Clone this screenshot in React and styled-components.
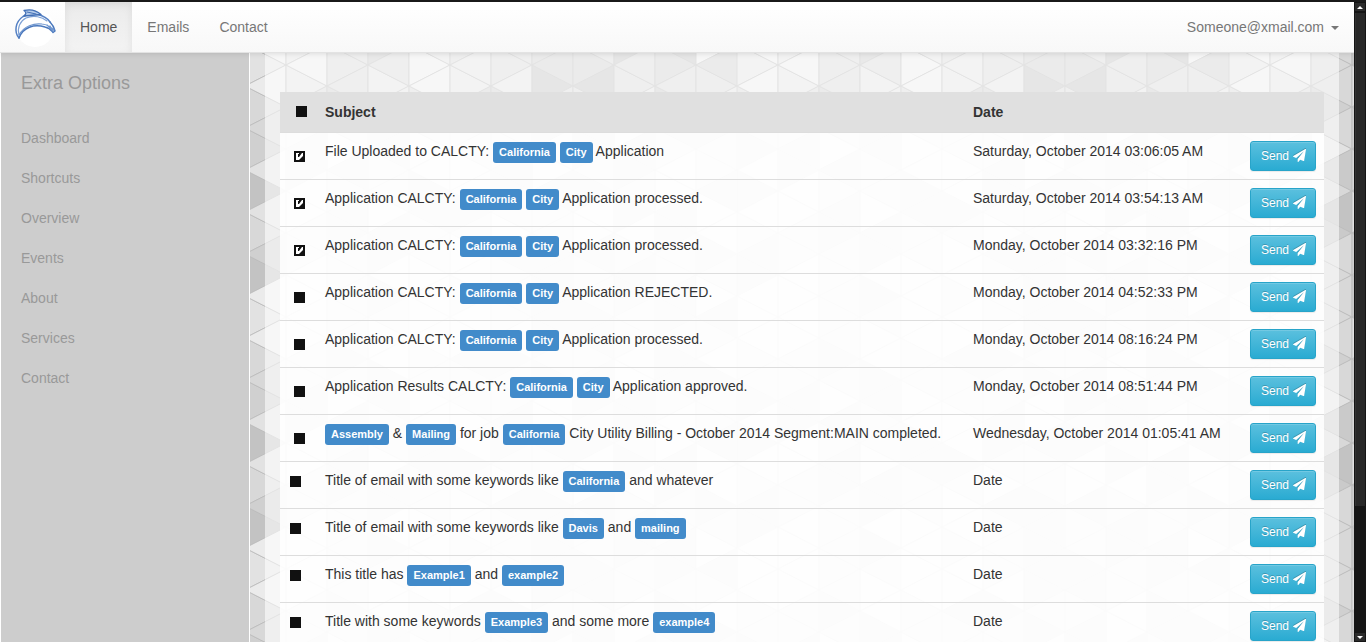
import React, { useState } from "react";
import styled, { createGlobalStyle } from "styled-components";

const GlobalStyle = createGlobalStyle`
  * { box-sizing: border-box; }
  body {
    margin: 0;
    background: #1a1a1a;
    color: #333;
    font: 14px/20px "Liberation Sans", Arial, sans-serif;
  }
`;

const Window = styled.div`
  display: flex;
  height: 100vh;
  padding-top: 2px;
  overflow: hidden;
`;

const Page = styled.div`
  flex: 1;
  min-width: 0;
  display: flex;
  flex-direction: column;
  background: #fff;
`;

const Navbar = styled.nav`
  position: relative;
  z-index: 1;
  flex: none;
  display: flex;
  height: 51px;
  background: linear-gradient(#fff, #f8f8f8);
  border-bottom: 1px solid #e3e3e3;
  box-shadow: 0 1px 5px rgba(0, 0, 0, 0.1);
`;

const Brand = styled.a`
  display: flex;
  padding: 2px 5px 2px 10px;
  svg { display: block; }
`;

const NavLink = styled.a`
  padding: 15px;
  color: ${(p) => (p.$active ? "#555" : "#777")};
  text-decoration: none;
  background: ${(p) => (p.$active ? "linear-gradient(#ebebeb, #f3f3f3)" : "none")};
  box-shadow: ${(p) => (p.$active ? "inset 0 3px 9px rgba(0, 0, 0, 0.075)" : "none")};
`;

const UserMenu = styled.button`
  display: flex;
  align-items: center;
  gap: 7px;
  margin-left: auto;
  padding: 0 15px;
  border: 0;
  background: none;
  color: #777;
  font: inherit;
`;

const Caret = styled.span`
  border: 4px solid transparent;
  border-top-color: #777;
  border-bottom: 0;
  margin-top: 2px;
`;

const Body = styled.div`
  flex: 1;
  min-height: 0;
  display: flex;
`;

const Sidebar = styled.aside`
  flex: none;
  width: 250px;
  padding: 20px;
  border: solid #fff;
  border-width: 0 1px;
  background: #cdcdcd;
  color: #999;
`;

const SideTitle = styled.h2`
  margin: 0 0 25px;
  font-size: 18px;
  line-height: 20px;
  font-weight: normal;
`;

const SideLink = styled.a`
  display: block;
  color: inherit;
  line-height: 40px;
  text-decoration: none;
`;

const Main = styled.main`
  position: relative;
  flex: 1;
  min-width: 0;
  padding: 0 15px;
  overflow: hidden;
`;

const Backdrop = styled.svg`
  position: absolute;
  inset: 0;
  width: 100%;
  height: 100%;
`;

const Container = styled.div`
  position: relative;
  min-height: 100%;
  padding: 39px 15px;
  background: rgba(255, 255, 255, 0.58);
`;

const MailTable = styled.table`
  width: 100%;
  table-layout: fixed;
  border-spacing: 0;
  background: rgba(255, 255, 255, 0.86);
`;

const Col = styled.col`
  width: ${(p) => p.$width || "auto"};
`;

const Th = styled.th`
  padding: 10px 8px;
  background: rgba(221, 221, 221, 0.9);
  text-align: left;
`;

const Td = styled.td`
  padding: 8px;
  border-top: 1px solid #ddd;
  vertical-align: top;
  white-space: nowrap;
`;

const insets = { head: "0 0 2px 8px", label: "10px 0 0 6px", plain: "6px 0 0 2px" };

const Check = styled.input.attrs({ type: "checkbox" })`
  appearance: none;
  display: block;
  width: 11px;
  height: 11px;
  margin: ${(p) => insets[p.$inset]};
  background: #111;
  &:checked {
    background: #111 url("data:image/svg+xml,%3Csvg xmlns='http://www.w3.org/2000/svg' viewBox='0 0 11 11'%3E%3Cpath d='M2 2h3v1H4v3h1l3-4h1v3L5 9H2z' fill='white'/%3E%3C/svg%3E");
  }
`;

const Tag = styled.span`
  display: inline-block;
  padding: 5px 6px;
  border-radius: 3px;
  background: #428bca;
  color: #fff;
  font-size: 11px;
  line-height: 11px;
  font-weight: bold;
`;

const SendButton = styled.button`
  display: flex;
  align-items: flex-start;
  gap: 4px;
  width: 66px;
  height: 30px;
  padding: 5px 10px;
  border: 1px solid #28a4c9;
  border-radius: 3px;
  background: linear-gradient(#5bc0de, #2aabd2);
  box-shadow: inset 0 1px 0 rgba(255, 255, 255, 0.15), 0 1px 1px rgba(0, 0, 0, 0.075);
  color: #fff;
  font: 12px/18px "Liberation Sans", Arial, sans-serif;
  text-shadow: 0 -1px 0 rgba(0, 0, 0, 0.2);
  svg {
    flex: none;
    margin-top: 2px;
    filter: drop-shadow(0 -1px 0 rgba(0, 0, 0, 0.2));
  }
`;

const ScrollTrack = styled.div`
  flex: none;
  display: flex;
  flex-direction: column;
  width: 12px;
  background: #151515;
`;

const ScrollArrow = styled.span`
  flex: none;
  display: flex;
  align-items: center;
  justify-content: center;
  height: 10px;
  background: #2b2b2b;
  border: 1px solid #151515;
  &::after {
    content: "";
    border: 3px solid transparent;
    ${(p) => (p.$up ? "border-top: 0; border-bottom-color: #fff;" : "border-bottom: 0; border-top-color: #fff;")}
  }
`;

const ScrollThumb = styled.span`
  height: 77%;
  margin: 1px 1px auto;
  background: #282828;
  border-left: 1px solid #333;
`;

/* Shades of the triangle tile: 12 columns by 6 rows, lightest 0 to darkest 5. */
const rightPointing = [
  [2, 3, 5, 2, 5, 1], [1, 2, 3, 1, 2, 1], [3, 1, 2, 4, 2, 2], [1, 3, 2, 1, 3, 4],
  [2, 1, 3, 2, 1, 0], [1, 2, 0, 3, 1, 2], [3, 2, 4, 1, 2, 2], [5, 3, 1, 2, 4, 3],
  [2, 4, 3, 1, 2, 3], [2, 1, 4, 3, 2, 5], [4, 2, 1, 3, 2, 3], [2, 4, 2, 1, 3, 0],
];
const leftPointing = [
  [0, 2, 1, 1, 3, 0], [0, 2, 3, 1, 2, 1], [2, 2, 4, 5, 2, 2], [2, 1, 3, 2, 4, 1],
  [0, 2, 1, 3, 2, 1], [1, 3, 2, 0, 2, 1], [1, 2, 4, 2, 3, 2], [3, 2, 1, 3, 2, 4],
  [5, 3, 2, 1, 4, 2], [2, 1, 3, 2, 1, 3], [2, 3, 1, 4, 2, 5], [3, 1, 2, 3, 1, 2],
];
const shades = ["#ebebeb", "#e2e2e2", "#d8d8d8", "#d0d0d0", "#cacaca", "#c3c3c3"];

function TrianglePattern() {
  const cells = [];
  for (let c = 0; c < 12; c++) {
    const x = c * 41;
    for (let r = -1; r < 7; r++) {
      const k = (r + 6) % 6;
      const y = r * 42 + (c % 2 ? -21 : 0);
      cells.push(
        <path key={`r${c}-${r}`} d={`M${x} ${y}v42l41-21z`} fill={shades[rightPointing[c][k]]} />,
        <path key={`l${c}-${r}`} d={`M${x} ${y}l41-21v42z`} fill={shades[leftPointing[c][k]]} />
      );
    }
  }
  return (
    <Backdrop aria-hidden="true">
      <defs>
        <pattern id="triangles" x="-5" y="33" width="492" height="252" patternUnits="userSpaceOnUse">
          <g stroke="#bbb" strokeWidth="0.9">{cells}</g>
        </pattern>
      </defs>
      <rect width="100%" height="100%" fill="url(#triangles)" />
    </Backdrop>
  );
}

const Dolphin = () => (
  <svg width="50" height="46" viewBox="0 0 50 46" fill="none" strokeLinecap="round" strokeLinejoin="round">
    <circle cx="25" cy="24" r="19" fill="#fff" />
    <path d="M9 34C4 28 5 18 13 12.500C22 7 35 11 40 18" stroke="#5581c4" strokeWidth="1.5" />
    <path d="M9 31C7 24 10 17 16 14C24 10.500 32 13 37 17" stroke="#7da1d5" strokeWidth="1.1" />
    <path d="M14 12C16 10 17 9 14 6.500C20 5 26 6 31 10.500Z" fill="#b4cbea" stroke="#426fb5" strokeWidth="1.300" />
    <path d="M17 8L26 10" stroke="#426fb5" strokeWidth="1" />
    <path d="M9 34C13 23 24 20 35 23C40 24 41 26 43 28.500L45 27C44 23 42 20 40 18" stroke="#4a78bd" strokeWidth="1.5" />
    <path d="M9 31C14 22 24 19 32 20C37 20.500 40 22 44 26M37 21L42 26M40 22L43 27" stroke="#6f96cf" strokeWidth="1.200" />
  </svg>
);

const PaperPlane = () => (
  <svg width="13" height="13" viewBox="0 0 1792 1792" fill="currentColor" aria-hidden="true">
    <path d="M1764 11q33 24 27 64l-256 1536q-5 29-32 45-14 8-31 8-11 0-24-5l-453-185-242 295q-18 23-49 23-13 0-22-4-19-7-30.5-23.5t-11.5-36.5v-349l864-1059-1069 925-395-162q-37-14-40-55-2-40 32-59l1664-960q15-9 32-9 20 0 36 11z" />
  </svg>
);

const sideLinks = ["Dashboard", "Shortcuts", "Overview", "Events", "About", "Services", "Contact"];

/* Words wrapped in [brackets] are shown as keyword tags. */
const mails = [
  { subject: "File Uploaded to CALCTY: [California] [City] Application", date: "Saturday, October 2014 03:06:05 AM", checked: true },
  { subject: "Application CALCTY: [California] [City] Application processed.", date: "Saturday, October 2014 03:54:13 AM", checked: true },
  { subject: "Application CALCTY: [California] [City] Application processed.", date: "Monday, October 2014 03:32:16 PM", checked: true },
  { subject: "Application CALCTY: [California] [City] Application REJECTED.", date: "Monday, October 2014 04:52:33 PM" },
  { subject: "Application CALCTY: [California] [City] Application processed.", date: "Monday, October 2014 08:16:24 PM" },
  { subject: "Application Results CALCTY: [California] [City] Application approved.", date: "Monday, October 2014 08:51:44 PM" },
  { subject: "[Assembly] & [Mailing] for job [California] City Utility Billing - October 2014 Segment:MAIN completed.", date: "Wednesday, October 2014 01:05:41 AM" },
  { subject: "Title of email with some keywords like [California] and whatever", date: "Date", plain: true },
  { subject: "Title of email with some keywords like [Davis] and [mailing]", date: "Date", plain: true },
  { subject: "This title has [Example1] and [example2]", date: "Date", plain: true },
  { subject: "Title with some keywords [Example3] and some more [example4]", date: "Date", plain: true },
];

const Subject = ({ text }) =>
  text.split(/(\[[^\]]+\])/).map((part, i) =>
    part.startsWith("[") ? <Tag key={i}>{part.slice(1, -1)}</Tag> : part
  );

export default function App() {
  const [selected, setSelected] = useState(mails.map((m) => Boolean(m.checked)));
  const allSelected = selected.every(Boolean);
  const toggle = (index) => setSelected(selected.map((s, i) => (i === index ? !s : s)));

  return (
    <>
      <GlobalStyle />
      <Window>
        <Page>
          <Navbar>
            <Brand href="#" aria-label="Start page"><Dolphin /></Brand>
            <NavLink href="#home" $active>Home</NavLink>
            <NavLink href="#emails">Emails</NavLink>
            <NavLink href="#contact">Contact</NavLink>
            <UserMenu type="button">Someone@xmail.com<Caret /></UserMenu>
          </Navbar>
          <Body>
            <Sidebar>
              <SideTitle>Extra Options</SideTitle>
              {sideLinks.map((name) => (
                <SideLink key={name} href={`#${name.toLowerCase()}`}>{name}</SideLink>
              ))}
            </Sidebar>
            <Main>
              <TrianglePattern />
              <Container>
                <MailTable>
                  <colgroup>
                    <Col $width="37px" />
                    <Col />
                    <Col $width="277px" />
                    <Col $width="82px" />
                  </colgroup>
                  <thead>
                    <tr>
                      <Th>
                        <Check
                          $inset="head"
                          aria-label="Select all"
                          checked={allSelected}
                          onChange={() => setSelected(mails.map(() => !allSelected))}
                        />
                      </Th>
                      <Th>Subject</Th>
                      <Th>Date</Th>
                      <Th />
                    </tr>
                  </thead>
                  <tbody>
                    {mails.map((mail, i) => (
                      <tr key={i}>
                        <Td>
                          <Check
                            $inset={mail.plain ? "plain" : "label"}
                            aria-label="Select email"
                            checked={selected[i]}
                            onChange={() => toggle(i)}
                          />
                        </Td>
                        <Td><Subject text={mail.subject} /></Td>
                        <Td>{mail.date}</Td>
                        <Td><SendButton type="button">Send<PaperPlane /></SendButton></Td>
                      </tr>
                    ))}
                  </tbody>
                </MailTable>
              </Container>
            </Main>
          </Body>
        </Page>
        <ScrollTrack aria-hidden="true">
          <ScrollArrow $up />
          <ScrollThumb />
          <ScrollArrow />
        </ScrollTrack>
      </Window>
    </>
  );
}
